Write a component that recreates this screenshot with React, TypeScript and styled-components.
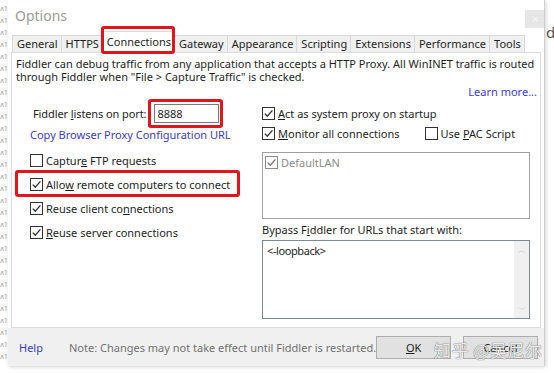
import React from 'react'
import styled, { createGlobalStyle } from 'styled-components'

const GlobalStyle = createGlobalStyle`
  html, body {
    margin: 0;
    padding: 0;
    background: #fff;
  }
  body {
    font-family: 'Noto Sans', 'Open Sans', sans-serif;
    font-size: 11px;
    color: #1e1e1e;
  }
`

const Screen = styled.div`
  position: relative;
  width: 554px;
  height: 373px;
  overflow: hidden;
  display: grid;
  grid-template-columns: 8px 537px 1fr;
  grid-template-rows: 366px 7px;
  background: #fff;
`

const EditorGutter = styled.div`
  grid-row: 1 / 3;
  display: flex;
  flex-direction: column;
  align-items: center;
  gap: 3px;
  padding-top: 4px;
  overflow: hidden;
  font-size: 7px;
  line-height: 9px;
  color: #9a9a9a;
`

const OuterText = styled.div`
  padding: 22px 0 0 1px;
  font-size: 15px;
  color: #555;
`

const BottomStrip = styled.div`
  grid-column: 1 / 4;
  display: flex;
  gap: 30px;
  padding-left: 2px;
  overflow: hidden;
  font-size: 12px;
  line-height: 12px;
  color: #333;
  & > span {
    margin-top: 1px;
  }
`

const Dialog = styled.div`
  position: relative;
  display: flex;
  flex-direction: column;
  background: #fff;
  border-right: 1px solid #cfcfcf;
  box-shadow: 1px 1px 4px rgba(0, 0, 0, 0.18);
`

const TitleBar = styled.div`
  height: 31px;
  display: flex;
  align-items: flex-start;
  justify-content: space-between;
  padding-left: 7px;
`

const Title = styled.div`
  margin-top: 6px;
  font-size: 14px;
  color: #9b9b9b;
`

const CloseButton = styled.div`
  width: 19px;
  height: 18px;
  margin-top: 10px;
  background: #e6e6e6;
  color: #f4f4f4;
  font-size: 10px;
  line-height: 18px;
  text-align: center;
`

const TabStrip = styled.div`
  display: flex;
  align-items: flex-end;
  height: 21px;
  padding-left: 5px;
`

const Tab = styled.div<{ $active?: boolean }>`
  position: relative;
  height: ${({ $active }) => ($active ? '21px' : '17px')};
  padding: 0 3px 0 4px;
  box-sizing: border-box;
  border: 1px solid #d9d9d9;
  border-bottom: none;
  margin-left: -1px;
  background: ${({ $active }) => ($active ? '#fff' : '#f0f0f0')};
  line-height: ${({ $active }) => ($active ? '19px' : '15px')};
  font-size: 11px;
  color: #1e1e1e;
  white-space: nowrap;
  z-index: ${({ $active }) => ($active ? 1 : 0)};
`

const RedMark = styled.div<{ $inset: string }>`
  position: absolute;
  inset: ${({ $inset }) => $inset};
  border: 3px solid #e0161c;
  border-radius: 3px;
  pointer-events: none;
`

const Panel = styled.div`
  height: 276px;
  box-sizing: border-box;
  margin: 0 3px;
  border: 1px solid #dcdcdc;
  padding: 4px 3px 0 4px;
  display: flex;
  flex-direction: column;
`

const Blurb = styled.div`
  line-height: 13px;
`

const LinkText = styled.span`
  color: #3b3bcf;
  line-height: 13px;
`

const LearnRow = styled.div`
  display: flex;
  justify-content: flex-end;
  margin-top: 2px;
`

const Columns = styled.div`
  display: grid;
  grid-template-columns: 246px 268px;
`

const LeftCol = styled.div`
  display: flex;
  flex-direction: column;
  padding-top: 6px;
`

const RightCol = styled.div`
  display: flex;
  flex-direction: column;
  padding-top: 5px;
`

const PortRow = styled.div`
  display: flex;
  align-items: center;
  gap: 8px;
  height: 19px;
  margin-left: 17px;
`

const PortLabel = styled.span`
  letter-spacing: -0.1px;
`

const PortWrap = styled.div`
  position: relative;
`

const PortInput = styled.div`
  width: 65px;
  height: 19px;
  box-sizing: border-box;
  border: 1px solid #7a7a7a;
  padding-left: 2px;
  line-height: 17px;
`

const CopyLink = styled.div`
  margin: 5px 0 0 14px;
  height: 13px;
  display: flex;
`

const OptionList = styled.div<{ $rowHeight: number; $top: number }>`
  display: flex;
  flex-direction: column;
  margin-top: ${({ $top }) => $top}px;
  & > * {
    height: ${({ $rowHeight }) => $rowHeight}px;
  }
`

const OptionRow = styled.div<{ $indent?: number }>`
  position: relative;
  display: flex;
  align-items: center;
  gap: 25px;
  padding-left: ${({ $indent }) => $indent ?? 0}px;
`

const Option = styled.label<{ $dim?: boolean }>`
  display: flex;
  align-items: center;
  gap: 3px;
  color: ${({ $dim }) => ($dim ? '#8a8a8a' : '#1e1e1e')};
  white-space: nowrap;
`

const Box = styled.span<{ $dim?: boolean }>`
  width: 13px;
  height: 13px;
  box-sizing: border-box;
  border: 1px solid ${({ $dim }) => ($dim ? '#8c8c8c' : '#333')};
  background: #fff;
  display: inline-flex;
  flex-shrink: 0;
`

const ListBox = styled.div`
  height: 67px;
  margin-top: 9px;
  box-sizing: border-box;
  border: 1px solid #a0a0a0;
  padding: 2px 0 0 2px;
`

const FieldLabel = styled.div`
  margin-top: 4px;
  line-height: 13px;
`

const TextArea = styled.div`
  height: 79px;
  margin-top: 4px;
  box-sizing: border-box;
  border: 1px solid #828790;
  display: flex;
  justify-content: space-between;
`

const AreaText = styled.div`
  padding: 2px 0 0 4px;
  letter-spacing: -0.4px;
`

const ScrollTrack = styled.div`
  width: 15px;
  background: #f0f0f0;
  display: flex;
  flex-direction: column;
  justify-content: space-between;
  align-items: center;
  padding: 3px 0;
  color: #c2c2c2;
  font-size: 8px;
`

const Footer = styled.div`
  flex: 1;
  background: #f0f0f0;
  display: flex;
  align-items: center;
  padding: 0 6px 0 11px;
`

const HelpLink = styled(LinkText)`
  margin-right: 26px;
`

const Note = styled.span`
  flex: 1;
  color: #707070;
  white-space: nowrap;
`

const Button = styled.div`
  width: 75px;
  height: 23px;
  box-sizing: border-box;
  border: 1px solid #adadad;
  background: #e1e1e1;
  display: flex;
  align-items: center;
  justify-content: center;
  & + & {
    margin-left: 12px;
  }
`

const Watermark = styled.div`
  position: absolute;
  left: 434px;
  top: 337px;
  font-family: 'Noto Sans CJK SC', sans-serif;
  font-size: 17px;
  letter-spacing: 0.5px;
  color: rgba(255, 255, 255, 0.85);
  text-shadow: 0 0 1px #7a7a7a, 0 0 1px #7a7a7a;
  white-space: nowrap;
`

const Check = ({ on = true, dim = false }: { on?: boolean; dim?: boolean }) => (
  <Box $dim={dim}>
    {on && (
      <svg width="11" height="11" viewBox="0 0 11 11">
        <path d="M1.8 5.6 L4.3 8.2 L9.4 2.4" fill="none" stroke={dim ? '#777' : '#333'} strokeWidth="1.3" />
      </svg>
    )}
  </Box>
)

const tabs = ['General', 'HTTPS', 'Connections', 'Gateway', 'Appearance', 'Scripting', 'Extensions', 'Performance', 'Tools']

export default function App() {
  return (
    <Screen>
      <GlobalStyle />
      <EditorGutter>
        {Array.from({ length: 30 }).map((_, i) => (
          <span key={i}>ʌ1</span>
        ))}
      </EditorGutter>

      <Dialog>
        <TitleBar>
          <Title>Options</Title>
          <CloseButton>✕</CloseButton>
        </TitleBar>

        <TabStrip>
          {tabs.map((t) => (
            <Tab key={t} $active={t === 'Connections'}>
              {t}
              {t === 'Connections' && <RedMark $inset="-6px -1px -2px -2px" />}
            </Tab>
          ))}
        </TabStrip>

        <Panel>
          <Blurb>
            Fiddler can debug traffic from any application that accepts a HTTP Proxy. All WinINET traffic is routed
            <br />
            through Fiddler when "File &gt; Capture Traffic" is checked.
          </Blurb>
          <LearnRow>
            <LinkText>Learn more...</LinkText>
          </LearnRow>

          <Columns>
            <LeftCol>
              <PortRow>
                <PortLabel>
                  Fiddler <u>l</u>istens on port:
                </PortLabel>
                <PortWrap>
                  <PortInput>8888</PortInput>
                  <RedMark $inset="-5px -4px -5px -6px" />
                </PortWrap>
              </PortRow>
              <CopyLink>
                <LinkText>Copy Browser Proxy Configuration URL</LinkText>
              </CopyLink>

              <OptionList $rowHeight={24} $top={7}>
                <OptionRow $indent={14}>
                  <Option>
                    <Check on={false} />
                    <span>
                      Captur<u>e</u> FTP requests
                    </span>
                  </Option>
                </OptionRow>
                <OptionRow $indent={14}>
                  <Option>
                    <Check />
                    <span>
                      Allo<u>w</u> remote computers to connect
                    </span>
                  </Option>
                  <RedMark $inset="-2px 22px -1px -1px" />
                </OptionRow>
                <OptionRow $indent={14}>
                  <Option>
                    <Check />
                    <span>
                      Reuse client co<u>n</u>nections
                    </span>
                  </Option>
                </OptionRow>
                <OptionRow $indent={14}>
                  <Option>
                    <Check />
                    <span>
                      <u>R</u>euse server connections
                    </span>
                  </Option>
                </OptionRow>
              </OptionList>
            </LeftCol>

            <RightCol>
              <OptionList $rowHeight={20} $top={0}>
                <OptionRow>
                  <Option>
                    <Check />
                    <span>
                      <u>A</u>ct as system proxy on startup
                    </span>
                  </Option>
                </OptionRow>
                <OptionRow>
                  <Option>
                    <Check />
                    <span>
                      <u>M</u>onitor all connections
                    </span>
                  </Option>
                  <Option>
                    <Check on={false} />
                    <span>
                      Use <u>P</u>AC Script
                    </span>
                  </Option>
                </OptionRow>
              </OptionList>
              <ListBox>
                <Option $dim>
                  <Check dim />
                  <span>DefaultLAN</span>
                </Option>
              </ListBox>
              <FieldLabel>
                Bypass F<u>i</u>ddler for URLs that start with:
              </FieldLabel>
              <TextArea>
                <AreaText>&lt;-loopback&gt;</AreaText>
                <ScrollTrack>
                  <span>︿</span>
                  <span>﹀</span>
                </ScrollTrack>
              </TextArea>
            </RightCol>
          </Columns>
        </Panel>

        <Footer>
          <HelpLink>Help</HelpLink>
          <Note>Note: Changes may not take effect until Fiddler is restarted.</Note>
          <Button>
            <span>
              <u>O</u>K
            </span>
          </Button>
          <Button>Cancel</Button>
        </Footer>
      </Dialog>

      <OuterText>d</OuterText>

      <BottomStrip>
        <span>Wi-Fi</span>
        <span>▭▭</span>
        <span>Send to device</span>
      </BottomStrip>

      <Watermark>知乎 @吴尼尔</Watermark>
    </Screen>
  )
}
